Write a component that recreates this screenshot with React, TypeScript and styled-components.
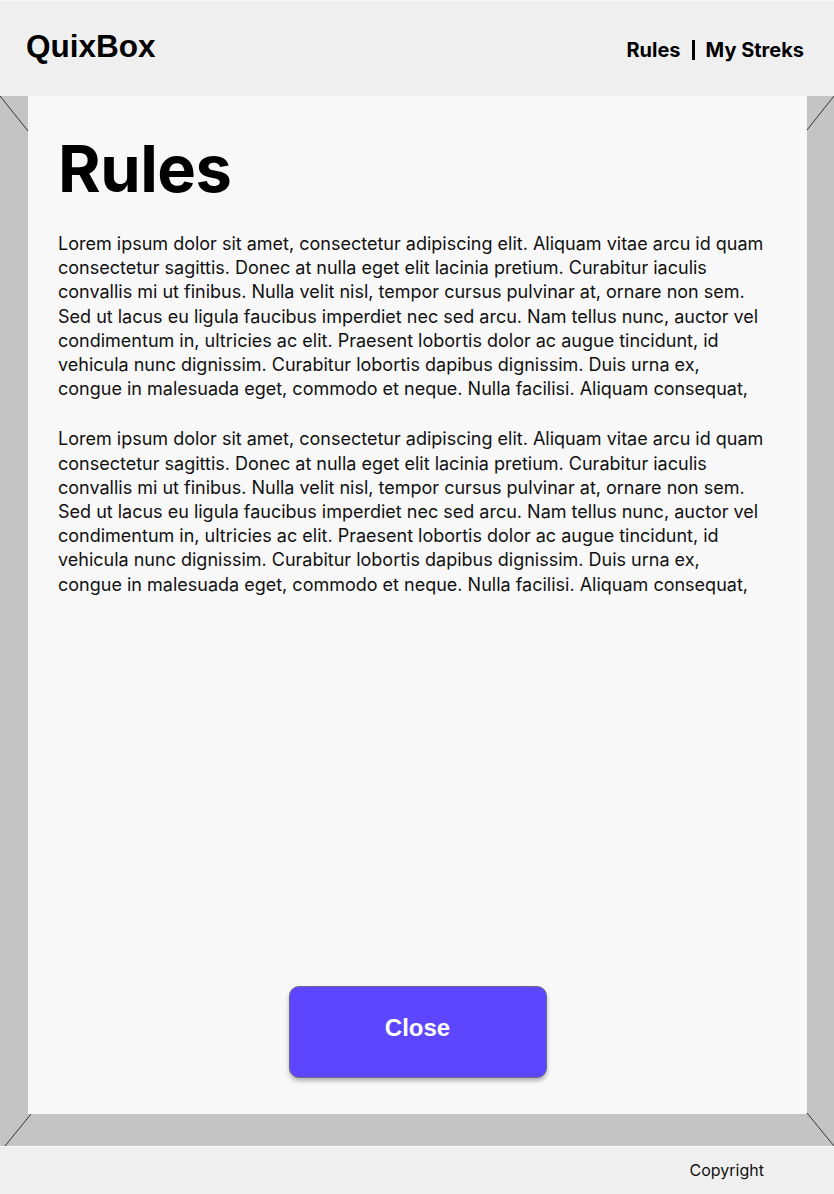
import React from "react";
import styled, { createGlobalStyle } from "styled-components";

const GlobalStyle = createGlobalStyle`
  html, body { margin: 0; padding: 0; }
  body { background: #efefef; font-family: Inter, "Noto Sans", sans-serif; color: #000; }
  * { box-sizing: border-box; }
`;

const Page = styled.div`
  width: 834px;
  min-height: 1194px;
  display: flex;
  flex-direction: column;
`;

const Header = styled.header`
  height: 96px;
  background: #efefef;
  border-top: 1px solid #f7f7f7;
  display: flex;
  align-items: center;
  justify-content: space-between;
  padding: 0 30px 6px 26px;
`;

const Logo = styled.div`
  font-family: "Liberation Sans", Arial, sans-serif;
  font-weight: 700;
  font-size: 31.5px;
  padding-top: 2px;
`;

const Nav = styled.nav`
  display: flex;
  align-items: center;
  gap: 11px;
  font-family: Inter, sans-serif;
  font-weight: 700;
  font-size: 20px;
  padding-top: 8px;
`;

const NavLink = styled.a`
  color: #000;
  text-decoration: none;
`;

const Divider = styled.span`
  width: 3px;
  height: 20px;
  background: #000;
`;

const Stage = styled.main`
  position: relative;
  flex: 1;
  background: #c4c4c4;
  padding: 0 27px 32px 28px;
  display: flex;
`;

const Panel = styled.section`
  flex: 1;
  background: #f8f8f8;
  display: flex;
  flex-direction: column;
  padding: 34px 40px 36px 30px;
`;

const Title = styled.h1`
  margin: 0 0 25px;
  font-family: Inter, sans-serif;
  font-weight: 700;
  font-size: 65px;
  line-height: 77px;
  letter-spacing: -0.5px;
`;

const Para = styled.p`
  margin: 0 0 26px;
  font-family: Inter, sans-serif;
  font-size: 18px;
  line-height: 24.2px;
  color: #111;
`;

const CloseButton = styled.button`
  margin-top: auto;
  align-self: center;
  margin-left: 10px;
  width: 258px;
  height: 92px;
  padding: 0 0 8px;
  border-radius: 10px;
  border: 1px solid #6a6a8a;
  background: #5c46ff;
  box-shadow: 0 3px 4px rgba(0, 0, 0, 0.28);
  color: #fff;
  font-family: "Liberation Sans", Arial, sans-serif;
  font-weight: 700;
  font-size: 24px;
  cursor: pointer;
`;

const Corner = styled.svg<{ $pos: "tl" | "tr" | "bl" | "br" }>`
  position: absolute;
  width: 34px;
  height: 36px;
  ${(p) => (p.$pos[0] === "t" ? "top: 0;" : "bottom: 0;")}
  ${(p) => (p.$pos[1] === "l" ? "left: 0;" : "right: 0;")}
  overflow: visible;
`;

const Footer = styled.footer`
  height: 48px;
  background: #efefef;
  border-top: 1px solid #fafafa;
  display: flex;
  align-items: center;
  justify-content: flex-end;
  padding: 0 70px 1px 0;
  font-family: Inter, sans-serif;
  font-size: 16px;
  color: #111;
`;

const lorem =
  "Lorem ipsum dolor sit amet, consectetur adipiscing elit. Aliquam vitae arcu id quam consectetur sagittis. Donec at nulla eget elit lacinia pretium. Curabitur iaculis convallis mi ut finibus. Nulla velit nisl, tempor cursus pulvinar at, ornare non sem. Sed ut lacus eu ligula faucibus imperdiet nec sed arcu. Nam tellus nunc, auctor vel condimentum in, ultricies ac elit. Praesent lobortis dolor ac augue tincidunt, id vehicula nunc dignissim. Curabitur lobortis dapibus dignissim. Duis urna ex, congue in malesuada eget, commodo et neque. Nulla facilisi. Aliquam consequat,";

export default function App() {
  return (
    <Page>
      <GlobalStyle />
      <Header>
        <Logo>QuixBox</Logo>
        <Nav>
          <NavLink href="#">Rules</NavLink>
          <Divider />
          <NavLink href="#">My Streks</NavLink>
        </Nav>
      </Header>
      <Stage>
        <Corner $pos="tl" viewBox="0 0 34 36">
          <line x1="0" y1="0" x2="28" y2="35" stroke="#333" strokeWidth="1" />
        </Corner>
        <Corner $pos="tr" viewBox="0 0 34 36">
          <line x1="34" y1="0" x2="7" y2="34" stroke="#333" strokeWidth="1" />
        </Corner>
        <Corner $pos="bl" viewBox="0 0 34 36">
          <line x1="31" y1="4" x2="5" y2="36" stroke="#333" strokeWidth="1" />
        </Corner>
        <Corner $pos="br" viewBox="0 0 34 36">
          <line x1="7" y1="3" x2="34" y2="36" stroke="#333" strokeWidth="1" />
        </Corner>
        <Panel>
          <Title>Rules</Title>
          <Para>{lorem}</Para>
          <Para>{lorem}</Para>
          <CloseButton>Close</CloseButton>
        </Panel>
      </Stage>
      <Footer>Copyright</Footer>
    </Page>
  );
}
